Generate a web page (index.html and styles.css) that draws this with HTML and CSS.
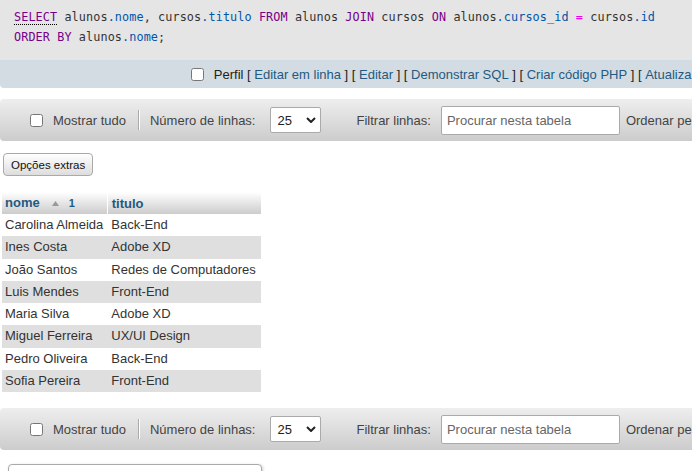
FILE: index.html
```html
<!DOCTYPE html>
<html lang="pt">
<head>
<meta charset="utf-8">
<title>phpMyAdmin - resultado</title>
<link rel="stylesheet" href="styles.css">
</head>
<body>
<div class="page">
  <div class="result-query">
    <pre class="sql"><code><span class="kw doc">SELECT</span> alunos<span class="var">.nome</span>, cursos<span class="var">.titulo</span> <span class="kw">FROM</span> alunos <span class="kw">JOIN</span> cursos <span class="kw">ON</span> alunos<span class="var">.cursos_id</span> <span class="op">=</span> cursos<span class="var">.id</span>
<span class="kw">ORDER</span> <span class="kw">BY</span> alunos<span class="var">.nome</span>;</code></pre>
    <div class="tools">
      <input type="checkbox" class="chk" id="perfil"><label for="perfil">Perfil</label>&nbsp;[&nbsp;<a href="#">Editar em linha</a>&nbsp;]&nbsp;[&nbsp;<a href="#">Editar</a>&nbsp;]&nbsp;[&nbsp;<a href="#">Demonstrar SQL</a>&nbsp;]&nbsp;[&nbsp;<a href="#">Criar código PHP</a>&nbsp;]&nbsp;[&nbsp;<a href="#">Atualizar</a>&nbsp;]
    </div>
  </div>

  <div class="navbar">
    <input type="checkbox" class="chk" id="all1"><label for="all1" class="lbl">Mostrar tudo</label>
    <span class="sep"></span>
    <label class="lbl lbl-rows">Número de linhas:</label>
    <span class="select-wrap">
      <select class="sel"><option>25</option><option>50</option><option>100</option></select>
      <svg class="chev" width="10" height="6" viewBox="0 0 10 6"><path d="M1 1l4 4 4-4" fill="none" stroke="#222" stroke-width="2"/></svg>
    </span>
    <label class="lbl lbl-filter">Filtrar linhas:</label>
    <input type="text" class="search" placeholder="Procurar nesta tabela">
    <label class="lbl">Ordenar pela chave:</label>
  </div>

  <button class="extras">Opções extras</button>

  <table class="results">
    <thead>
      <tr>
        <th class="col-nome">nome<span class="sort"><svg width="7" height="5" viewBox="0 0 7 5"><path d="M3.5 0L7 5H0z" fill="#999"/></svg></span><span class="sort-n">1</span></th>
        <th>titulo</th>
      </tr>
    </thead>
    <tbody>
      <tr><td>Carolina Almeida</td><td>Back-End</td></tr>
      <tr><td>Ines Costa</td><td>Adobe XD</td></tr>
      <tr><td>João Santos</td><td>Redes de Computadores</td></tr>
      <tr><td>Luis Mendes</td><td>Front-End</td></tr>
      <tr><td>Maria Silva</td><td>Adobe XD</td></tr>
      <tr><td>Miguel Ferreira</td><td>UX/UI Design</td></tr>
      <tr><td>Pedro Oliveira</td><td>Back-End</td></tr>
      <tr><td>Sofia Pereira</td><td>Front-End</td></tr>
    </tbody>
  </table>

  <div class="navbar navbar-bottom">
    <input type="checkbox" class="chk" id="all2"><label for="all2" class="lbl">Mostrar tudo</label>
    <span class="sep"></span>
    <label class="lbl lbl-rows">Número de linhas:</label>
    <span class="select-wrap">
      <select class="sel"><option>25</option><option>50</option><option>100</option></select>
      <svg class="chev" width="10" height="6" viewBox="0 0 10 6"><path d="M1 1l4 4 4-4" fill="none" stroke="#222" stroke-width="2"/></svg>
    </span>
    <label class="lbl lbl-filter">Filtrar linhas:</label>
    <input type="text" class="search" placeholder="Procurar nesta tabela">
    <label class="lbl">Ordenar pela chave:</label>
  </div>

  <div class="ops"></div>
</div>
</body>
</html>
```

FILE: styles.css
```css
html, body {
  margin: 0;
  padding: 0;
  overflow: hidden;
  background: #fff;
}

body {
  font-family: "Liberation Sans", Arial, sans-serif;
  font-size: 13px;
  color: #444;
}

.page {
  width: 720px;
}

.sql {
  margin: 0;
  padding: 7px 14px 13px;
  background: #e5e5e5;
  font-family: "DejaVu Sans Mono", monospace;
  font-size: 11.8px;
  letter-spacing: 0.1px;
  line-height: 20px;
  color: #333;
  white-space: pre;
}

.sql code {
  font-family: inherit;
}

.kw { color: #708; }
.var { color: #05a; }
.op { color: #e0e; }
.doc { border-bottom: 1px dotted #000; }

.tools {
  display: flex;
  justify-content: flex-end;
  align-items: center;
  height: 28px;
  padding-right: 17px;
  background: #d3dce3;
  border-radius: 0 0 4px 4px;
  color: #222;
  white-space: nowrap;
}

.tools a {
  color: #235a81;
  text-decoration: none;
}

.chk {
  width: 13px;
  height: 13px;
  margin: 0 10px 0 0;
  flex: none;
}

.navbar {
  display: flex;
  align-items: center;
  height: 42px;
  margin-top: 11px;
  padding-left: 30px;
  background: linear-gradient(#eee, #ccc);
  border-radius: 4px;
  white-space: nowrap;
  overflow: hidden;
}

.navbar-bottom {
  margin-top: 16px;
}

.lbl {
  color: #444;
  flex: none;
}

.sep {
  flex: none;
  width: 1px;
  height: 20px;
  background: #aaa;
  border-right: 1px solid #fff;
  margin: 0 10px 0 12px;
}

.lbl-rows {
  margin-right: 15px;
}

.select-wrap {
  position: relative;
  flex: none;
  display: inline-block;
  width: 51px;
  height: 26px;
  margin-right: 35px;
}

.sel {
  appearance: none;
  -webkit-appearance: none;
  box-sizing: border-box;
  width: 51px;
  height: 26px;
  margin: 0;
  padding: 0 0 0 6px;
  border: 1px solid #aaa;
  border-radius: 2px;
  background: #fff;
  font-family: "Liberation Sans", Arial, sans-serif;
  font-size: 13px;
  color: #222;
}

.chev {
  position: absolute;
  right: 5px;
  top: 10px;
  pointer-events: none;
}

.lbl-filter {
  margin-right: 10px;
}

.search {
  flex: none;
  box-sizing: border-box;
  width: 179px;
  height: 29px;
  margin: 0 6px 0 0;
  padding: 0 5px;
  border: 1px solid #aaa;
  border-radius: 2px;
  background: #fff;
  font-family: "Liberation Sans", Arial, sans-serif;
  font-size: 13px;
  color: #222;
}

.search::placeholder {
  color: #666;
}

.extras {
  display: block;
  box-sizing: border-box;
  height: 23px;
  margin: 12px 0 0 3px;
  padding: 0 7px;
  border: 1px solid #aaa;
  border-radius: 4px;
  background: linear-gradient(#fff, #ddd);
  font-family: "Liberation Sans", Arial, sans-serif;
  font-size: 11.5px;
  color: #111;
}

.results {
  border-collapse: collapse;
  margin: 16px 0 0 2px;
}

.results th {
  padding: 3px 5px 3px 4px;
  line-height: 15px;
  text-align: left;
  font-weight: bold;
  color: #235a81;
  background: linear-gradient(#fff, #ccc);
}

.results th.col-nome {
  padding-left: 3px;
  padding-right: 4px;
  border-right: 1px solid #fff;
}

.sort {
  display: inline-block;
  margin-left: 12px;
  vertical-align: 1px;
}

.sort svg {
  display: block;
}

.sort-n {
  margin-left: 10px;
  font-size: 11px;
}

.results td {
  padding: 3px 5px 3px 4px;
  line-height: 16.25px;
  color: #333;
  white-space: nowrap;
}

.results td:first-child {
  padding-left: 3px;
  padding-right: 4px;
}

.results tbody tr:nth-child(even) td {
  background: #dfdfdf;
}

.ops {
  box-sizing: border-box;
  width: 254px;
  height: 30px;
  margin: 14px 0 0 8px;
  border: 1px solid #aaa;
  border-radius: 4px 4px 0 0;
  background: #fff;
  box-shadow: 1px 1px 3px #ccc;
}
```
